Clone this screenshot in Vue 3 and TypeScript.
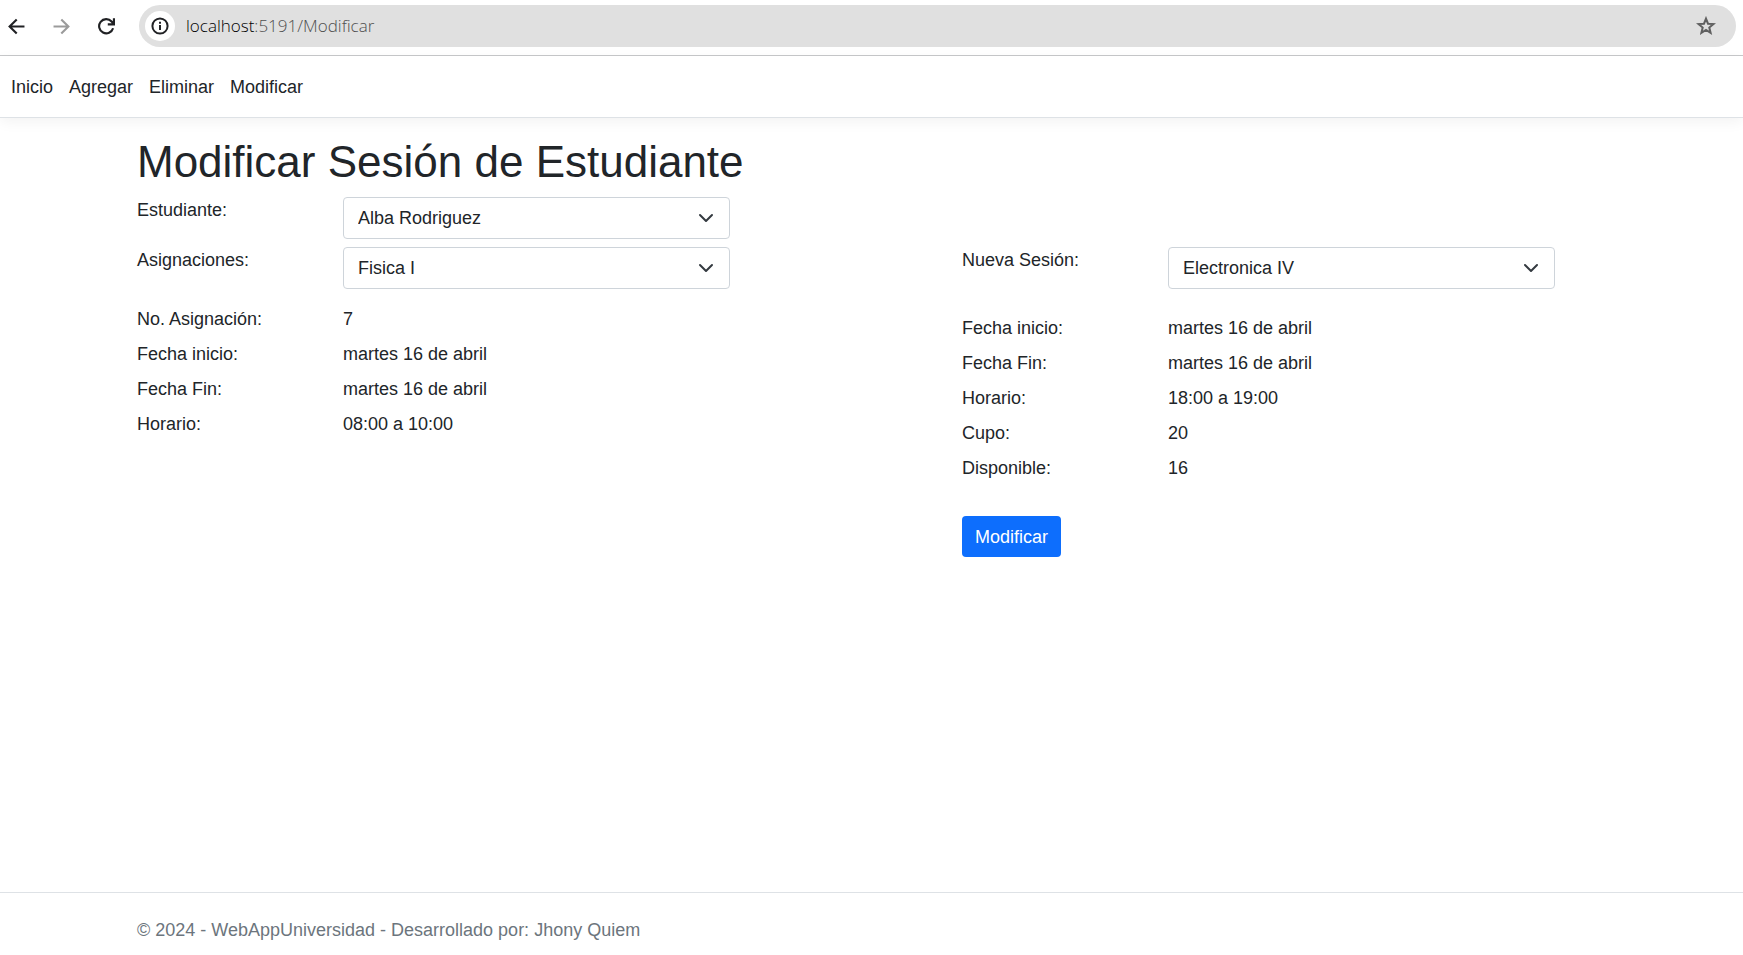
<script setup lang="ts">
import { ref } from 'vue'

interface Detail {
  label: string
  value: string
}

const links: string[] = ['Inicio', 'Agregar', 'Eliminar', 'Modificar']

const student = ref('Alba Rodriguez')
const assignment = ref('Fisica I')
const session = ref('Electronica IV')

const current: Detail[] = [
  { label: 'No. Asignación:', value: '7' },
  { label: 'Fecha inicio:', value: 'martes 16 de abril' },
  { label: 'Fecha Fin:', value: 'martes 16 de abril' },
  { label: 'Horario:', value: '08:00 a 10:00' },
]

const next: Detail[] = [
  { label: 'Fecha inicio:', value: 'martes 16 de abril' },
  { label: 'Fecha Fin:', value: 'martes 16 de abril' },
  { label: 'Horario:', value: '18:00 a 19:00' },
  { label: 'Cupo:', value: '20' },
  { label: 'Disponible:', value: '16' },
]
</script>

<template>
  <div class="window">
    <div class="toolbar">
      <button class="tool" type="button" aria-label="Atrás">
        <svg viewBox="0 0 16 16"><path d="M15.5 8H2M8.2 1.3L1.5 8l6.7 6.7" /></svg>
      </button>
      <button class="tool muted" type="button" aria-label="Adelante">
        <svg viewBox="0 0 16 16"><path d="M.5 8H14M7.8 1.3L14.5 8l-6.7 6.7" /></svg>
      </button>
      <button class="tool" type="button" aria-label="Recargar">
        <svg viewBox="0 0 16 16"><path d="M14.2 9.6A6.7 6.7 0 1 1 12.8 3.3L14.6 5.4M15 .2V6H9.2" /></svg>
      </button>
      <div class="address">
        <button class="info" type="button" aria-label="Información del sitio">
          <svg viewBox="0 0 18 18">
            <circle cx="9" cy="9" r="7.6" />
            <path d="M9 8v5M9 4.8v2" />
          </svg>
        </button>
        <div class="url"><span class="host">localhost</span>:5191/Modificar</div>
        <button class="star" type="button" aria-label="Añadir a marcadores">
          <svg viewBox="0 0 20 20">
            <path d="M10 2.6l2 5.1 5.5.4-4.2 3.5 1.3 5.3L10 14l-4.6 2.9 1.3-5.3L2.5 8.1 8 7.7z" />
          </svg>
        </button>
      </div>
    </div>

    <header class="header">
      <nav class="nav">
        <a v-for="link in links" :key="link" href="#">{{ link }}</a>
      </nav>
    </header>

    <main class="main">
      <h1>Modificar Sesión de Estudiante</h1>
      <form class="form" @submit.prevent>
        <div class="columns">
          <div class="field">
            <label for="student">Estudiante:</label>
            <select id="student" v-model="student">
              <option>Alba Rodriguez</option>
            </select>
          </div>
        </div>
        <div class="columns">
          <section>
            <div class="field">
              <label for="assignment">Asignaciones:</label>
              <select id="assignment" v-model="assignment">
                <option>Fisica I</option>
              </select>
            </div>
            <dl class="details">
              <div v-for="item in current" :key="item.label" class="field">
                <dt>{{ item.label }}</dt>
                <dd>{{ item.value }}</dd>
              </div>
            </dl>
          </section>
          <section>
            <div class="field">
              <label for="session">Nueva Sesión:</label>
              <select id="session" v-model="session">
                <option>Electronica IV</option>
              </select>
            </div>
            <dl class="details spaced">
              <div v-for="item in next" :key="item.label" class="field">
                <dt>{{ item.label }}</dt>
                <dd>{{ item.value }}</dd>
              </div>
            </dl>
            <button class="submit" type="submit">Modificar</button>
          </section>
        </div>
      </form>
    </main>

    <footer class="footer">© 2024 - WebAppUniversidad - Desarrollado por: Jhony Quiem</footer>
  </div>
</template>

<style>
body {
  margin: 0;
  background: #fff;
}
</style>

<style scoped>
* {
  box-sizing: border-box;
}

.window {
  display: flex;
  flex-direction: column;
  min-height: 100vh;
  color: #212529;
  font: 18px/26px "Liberation Sans", Arial, sans-serif;
}

button {
  padding: 0;
  border: 0;
  background: none;
  font: inherit;
}

svg {
  display: block;
  fill: none;
  stroke: currentColor;
  stroke-width: 2;
}

.toolbar {
  display: flex;
  align-items: center;
  padding: 5px 7px 8px 8px;
  border-bottom: 1px solid #c7c8ca;
}

.tool {
  width: 17px;
  margin-right: 28px;
  color: #202124;
}

.tool svg {
  width: 17px;
  height: 17px;
}

.tool.muted {
  color: #9b9b9b;
}

.address {
  display: flex;
  flex: 1;
  align-items: center;
  height: 42px;
  margin-left: -4px;
  padding: 0 20px 0 6px;
  border-radius: 21px;
  background: #e0e0e0;
}

.info {
  display: grid;
  place-items: center;
  width: 30px;
  height: 30px;
  border-radius: 50%;
  background: #fff;
  color: #202124;
}

.info svg {
  width: 18px;
  height: 18px;
}

.url {
  flex: 1;
  margin-left: 11px;
  color: #4f4f4f;
  font: 300 17px/26px "Open Sans", "Noto Sans", sans-serif;
}

.host {
  color: #000;
}

.star {
  color: #606060;
}

.star svg {
  width: 20px;
  height: 20px;
}

.header {
  padding: 18px 11px 17px;
  border-bottom: 1px solid #dee2e6;
  box-shadow: 0 4px 13px rgba(0, 0, 0, 0.05);
}

.nav {
  display: flex;
  gap: 16px;
}

.nav a {
  color: #212529;
  text-decoration: none;
}

.main {
  flex: 1;
  padding: 17px 188px 18px 137px;
}

h1 {
  margin: 0 0 9px;
  font-size: 44px;
  font-weight: 400;
  line-height: 53px;
}

.form {
  display: grid;
  gap: 8px;
}

.columns {
  display: grid;
  grid-template-columns: 1fr 1fr;
  gap: 232px;
}

.field {
  display: grid;
  grid-template-columns: 206px 1fr;
}

select {
  appearance: none;
  width: 100%;
  height: 42px;
  padding: 0 40px 0 14px;
  border: 1px solid #ced4da;
  border-radius: 4px;
  background: #fff url("data:image/svg+xml,%3Csvg xmlns='http://www.w3.org/2000/svg' viewBox='0 0 16 16'%3E%3Cpath fill='none' stroke='%23343a40' stroke-linecap='round' stroke-linejoin='round' stroke-width='2' d='m2 5 6 6 6-6'/%3E%3C/svg%3E") no-repeat right 15px center / 16px 16px;
  color: #212529;
  font: inherit;
}

.details {
  display: grid;
  gap: 9px;
  margin: 17px 0 0;
}

.details.spaced {
  margin-top: 26px;
}

dd {
  margin: 0;
}

.submit {
  height: 41px;
  margin-top: 35px;
  padding: 0 13px;
  border-radius: 4px;
  background: #0d6efd;
  color: #fff;
}

.footer {
  padding: 24px 137px 12px;
  border-top: 1px solid #dee2e6;
  color: #6c757d;
}
</style>
